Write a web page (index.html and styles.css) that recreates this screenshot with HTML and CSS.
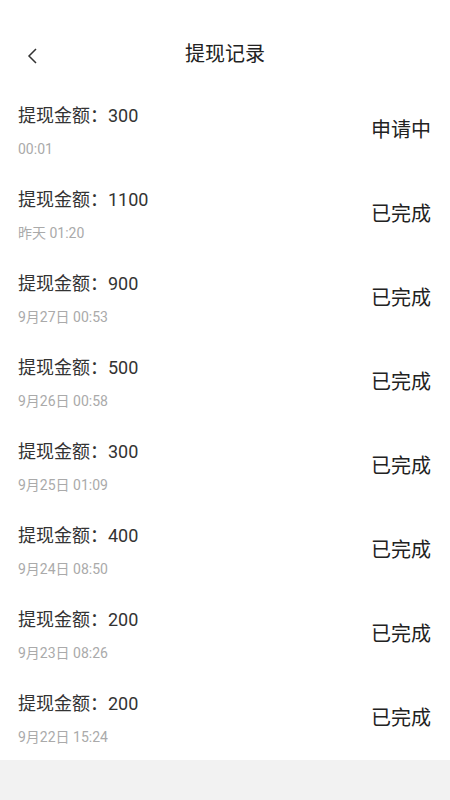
FILE: index.html
```html
<!DOCTYPE html>
<html lang="zh-CN">

<head>
  <meta charset="UTF-8">
  <meta name="viewport" content="width=device-width, initial-scale=1" />
  <title>提现记录</title>
  <link rel="stylesheet" href="styles.css">
</head>

<body>
  <header>
    <a class="back">
      <svg width="12" height="16" viewBox="0 0 12 16">
        <path d="M10 1 L3 8 L10 15" fill="none" stroke="#333" stroke-width="1.5" />
      </svg>
    </a>
    <h1>提现记录</h1>
  </header>
  <ul class="list">
    <li>
      <div class="info">
        <div class="amount">提现金额：300</div>
        <div class="time">00:01</div>
      </div>
      <div class="status">申请中</div>
    </li>
    <li>
      <div class="info">
        <div class="amount">提现金额：1100</div>
        <div class="time">昨天 01:20</div>
      </div>
      <div class="status">已完成</div>
    </li>
    <li>
      <div class="info">
        <div class="amount">提现金额：900</div>
        <div class="time">9月27日 00:53</div>
      </div>
      <div class="status">已完成</div>
    </li>
    <li>
      <div class="info">
        <div class="amount">提现金额：500</div>
        <div class="time">9月26日 00:58</div>
      </div>
      <div class="status">已完成</div>
    </li>
    <li>
      <div class="info">
        <div class="amount">提现金额：300</div>
        <div class="time">9月25日 01:09</div>
      </div>
      <div class="status">已完成</div>
    </li>
    <li>
      <div class="info">
        <div class="amount">提现金额：400</div>
        <div class="time">9月24日 08:50</div>
      </div>
      <div class="status">已完成</div>
    </li>
    <li>
      <div class="info">
        <div class="amount">提现金额：200</div>
        <div class="time">9月23日 08:26</div>
      </div>
      <div class="status">已完成</div>
    </li>
    <li>
      <div class="info">
        <div class="amount">提现金额：200</div>
        <div class="time">9月22日 15:24</div>
      </div>
      <div class="status">已完成</div>
    </li>
  </ul>
</body>

</html>
```

FILE: styles.css
```css
html,
body {
  margin: 0;
  padding: 0;
  height: 100%;
  background: #f2f2f2;
  font-family: Roboto, "Noto Sans CJK SC", sans-serif;
  color: #333;
}

header {
  height: 88px;
  padding-top: 34px;
  box-sizing: border-box;
  position: relative;
  background: #fff;
  text-align: center;
}

header .back {
  position: absolute;
  left: 26px;
  top: 48px;
  width: 12px;
  height: 16px;
}

header .back svg {
  display: block;
}

h1 {
  margin: 0;
  padding: 0;
  height: 40px;
  line-height: 40px;
  font-size: 20px;
  font-weight: normal;
  color: #222;
}

.list {
  margin: 0;
  padding: 0;
  list-style: none;
  background: #fff;
}

.list li {
  height: 84px;
  box-sizing: border-box;
  padding: 16px 19px 0 18px;
  display: flex;
  justify-content: space-between;
}

.amount {
  height: 24px;
  line-height: 24px;
  font-size: 18px;
  color: #333;
}

.time {
  margin-top: 11px;
  height: 20px;
  line-height: 20px;
  font-size: 14px;
  color: #aaa;
}

.status {
  margin-top: 12px;
  height: 28px;
  line-height: 28px;
  font-size: 20px;
  color: #222;
}
```
